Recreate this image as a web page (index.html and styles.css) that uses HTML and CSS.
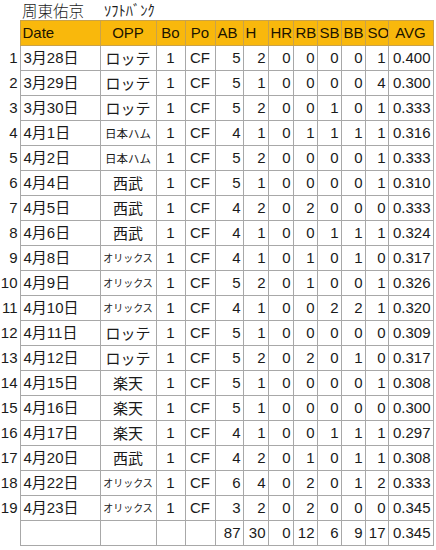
FILE: index.html
```html
<!DOCTYPE html>
<html lang="ja">
<head>
<meta charset="utf-8">
<link rel="stylesheet" href="styles.css">
</head>
<body>
<div class="title"><span class="name">周東佑京</span><span class="team">ｿﾌﾄﾊﾞﾝｸ</span></div>
<table class="stats">
<colgroup>
<col class="w-n"><col class="w-date"><col class="w-opp"><col class="w-bo"><col class="w-po"><col class="w-ab"><col class="w-h"><col class="w-hr"><col class="w-rb"><col class="w-sb"><col class="w-bb"><col class="w-so"><col class="w-avg">
</colgroup>
<thead>
<tr><th class="n"></th><th class="l">Date</th><th class="c">OPP</th><th class="c">Bo</th><th class="c">Po</th><th class="l">AB</th><th class="l">H</th><th class="l">HR</th><th class="l">RB</th><th class="l">SB</th><th class="l">BB</th><th class="l">SO</th><th class="c">AVG</th></tr>
</thead>
<tbody>
<tr><td class="n">1</td><td class="d">3月28日</td><td class="o">ロッテ</td><td class="c">1</td><td class="c">CF</td><td>5</td><td>2</td><td>0</td><td>0</td><td>0</td><td>0</td><td>1</td><td>0.400</td></tr>
<tr><td class="n">2</td><td class="d">3月29日</td><td class="o">ロッテ</td><td class="c">1</td><td class="c">CF</td><td>5</td><td>1</td><td>0</td><td>0</td><td>0</td><td>0</td><td>4</td><td>0.300</td></tr>
<tr><td class="n">3</td><td class="d">3月30日</td><td class="o">ロッテ</td><td class="c">1</td><td class="c">CF</td><td>5</td><td>2</td><td>0</td><td>0</td><td>1</td><td>0</td><td>1</td><td>0.333</td></tr>
<tr><td class="n">4</td><td class="d">4月1日</td><td class="o o-m">日本ハム</td><td class="c">1</td><td class="c">CF</td><td>4</td><td>1</td><td>0</td><td>1</td><td>1</td><td>1</td><td>1</td><td>0.316</td></tr>
<tr><td class="n">5</td><td class="d">4月2日</td><td class="o o-m">日本ハム</td><td class="c">1</td><td class="c">CF</td><td>5</td><td>2</td><td>0</td><td>0</td><td>0</td><td>0</td><td>1</td><td>0.333</td></tr>
<tr><td class="n">6</td><td class="d">4月4日</td><td class="o">西武</td><td class="c">1</td><td class="c">CF</td><td>5</td><td>1</td><td>0</td><td>0</td><td>0</td><td>0</td><td>1</td><td>0.310</td></tr>
<tr><td class="n">7</td><td class="d">4月5日</td><td class="o">西武</td><td class="c">1</td><td class="c">CF</td><td>4</td><td>2</td><td>0</td><td>2</td><td>0</td><td>0</td><td>0</td><td>0.333</td></tr>
<tr><td class="n">8</td><td class="d">4月6日</td><td class="o">西武</td><td class="c">1</td><td class="c">CF</td><td>4</td><td>1</td><td>0</td><td>0</td><td>1</td><td>1</td><td>1</td><td>0.324</td></tr>
<tr><td class="n">9</td><td class="d">4月8日</td><td class="o o-s">オリックス</td><td class="c">1</td><td class="c">CF</td><td>4</td><td>1</td><td>0</td><td>1</td><td>0</td><td>1</td><td>0</td><td>0.317</td></tr>
<tr><td class="n">10</td><td class="d">4月9日</td><td class="o o-s">オリックス</td><td class="c">1</td><td class="c">CF</td><td>5</td><td>2</td><td>0</td><td>1</td><td>0</td><td>0</td><td>1</td><td>0.326</td></tr>
<tr><td class="n">11</td><td class="d">4月10日</td><td class="o o-s">オリックス</td><td class="c">1</td><td class="c">CF</td><td>4</td><td>1</td><td>0</td><td>0</td><td>2</td><td>2</td><td>1</td><td>0.320</td></tr>
<tr><td class="n">12</td><td class="d">4月11日</td><td class="o">ロッテ</td><td class="c">1</td><td class="c">CF</td><td>5</td><td>1</td><td>0</td><td>0</td><td>0</td><td>0</td><td>0</td><td>0.309</td></tr>
<tr><td class="n">13</td><td class="d">4月12日</td><td class="o">ロッテ</td><td class="c">1</td><td class="c">CF</td><td>5</td><td>2</td><td>0</td><td>2</td><td>0</td><td>1</td><td>0</td><td>0.317</td></tr>
<tr><td class="n">14</td><td class="d">4月15日</td><td class="o">楽天</td><td class="c">1</td><td class="c">CF</td><td>5</td><td>1</td><td>0</td><td>0</td><td>0</td><td>0</td><td>1</td><td>0.308</td></tr>
<tr><td class="n">15</td><td class="d">4月16日</td><td class="o">楽天</td><td class="c">1</td><td class="c">CF</td><td>5</td><td>1</td><td>0</td><td>0</td><td>0</td><td>0</td><td>0</td><td>0.300</td></tr>
<tr><td class="n">16</td><td class="d">4月17日</td><td class="o">楽天</td><td class="c">1</td><td class="c">CF</td><td>4</td><td>1</td><td>0</td><td>0</td><td>1</td><td>1</td><td>1</td><td>0.297</td></tr>
<tr><td class="n">17</td><td class="d">4月20日</td><td class="o">西武</td><td class="c">1</td><td class="c">CF</td><td>4</td><td>2</td><td>0</td><td>1</td><td>0</td><td>1</td><td>1</td><td>0.308</td></tr>
<tr><td class="n">18</td><td class="d">4月22日</td><td class="o o-s">オリックス</td><td class="c">1</td><td class="c">CF</td><td>6</td><td>4</td><td>0</td><td>2</td><td>0</td><td>1</td><td>2</td><td>0.333</td></tr>
<tr><td class="n">19</td><td class="d">4月23日</td><td class="o o-s">オリックス</td><td class="c">1</td><td class="c">CF</td><td>3</td><td>2</td><td>0</td><td>2</td><td>0</td><td>0</td><td>0</td><td>0.345</td></tr>
<tr><td class="n"></td><td class="d"></td><td class="o"></td><td class="c"></td><td class="c"></td><td>87</td><td>30</td><td>0</td><td>12</td><td>6</td><td>9</td><td>17</td><td>0.345</td></tr>
</tbody>
</table>
</body>
</html>
```

FILE: styles.css
```css
html, body {
  margin: 0;
  padding: 0;
  background: #ffffff;
}
body {
  font-family: "Liberation Sans", "Noto Sans CJK JP", sans-serif;
  color: #1a1a1a;
}
.title {
  height: 20px;
  display: flex;
  align-items: center;
  padding-left: 22px;
  gap: 20px;
}
.title .name {
  font-family: "Noto Sans CJK JP", sans-serif;
  font-size: 15.5px;
  font-weight: 300;
  line-height: 20px;
}
.title .team {
  font-family: "Noto Sans CJK JP", sans-serif;
  font-size: 14.5px;
  line-height: 20px;
}
.stats {
  border-collapse: collapse;
  table-layout: fixed;
  width: 433px;
  font-size: 15px;
}
.w-n { width: 20px; }
.w-date { width: 80px; }
.w-opp { width: 56px; }
.w-bo { width: 29px; }
.w-po { width: 30px; }
.w-ab { width: 28px; }
.w-h { width: 25px; }
.w-hr { width: 25px; }
.w-rb { width: 24px; }
.w-sb { width: 24px; }
.w-bb { width: 24px; }
.w-so { width: 23px; }
.w-avg { width: 45px; }
.stats th, .stats td {
  height: 24px;
  padding: 0 2px;
  border: 1px solid #a8a8a8;
  white-space: nowrap;
  overflow: hidden;
  text-align: right;
  font-weight: normal;
  line-height: 24px;
}
.stats th {
  background: #f9b80c;
  border-color: #c9a24a;
  color: #1c1400;
  font-size: 15px;
}
.stats th.l { text-align: left; }
.stats th.c { text-align: center; }
.stats .n {
  border: none;
  background: #fff;
  text-align: right;
  padding: 0 2px 0 0;
}
.stats td.d {
  text-align: left;
  padding-left: 3px;
}
.stats td.o {
  text-align: center;
  font-family: "Noto Sans CJK JP", sans-serif;
  font-size: 15px;
  padding: 0;
}
.stats td.o-m { font-size: 11.5px; }
.stats td.o-s { font-size: 10px; }
.stats td.c { text-align: center; }
```
